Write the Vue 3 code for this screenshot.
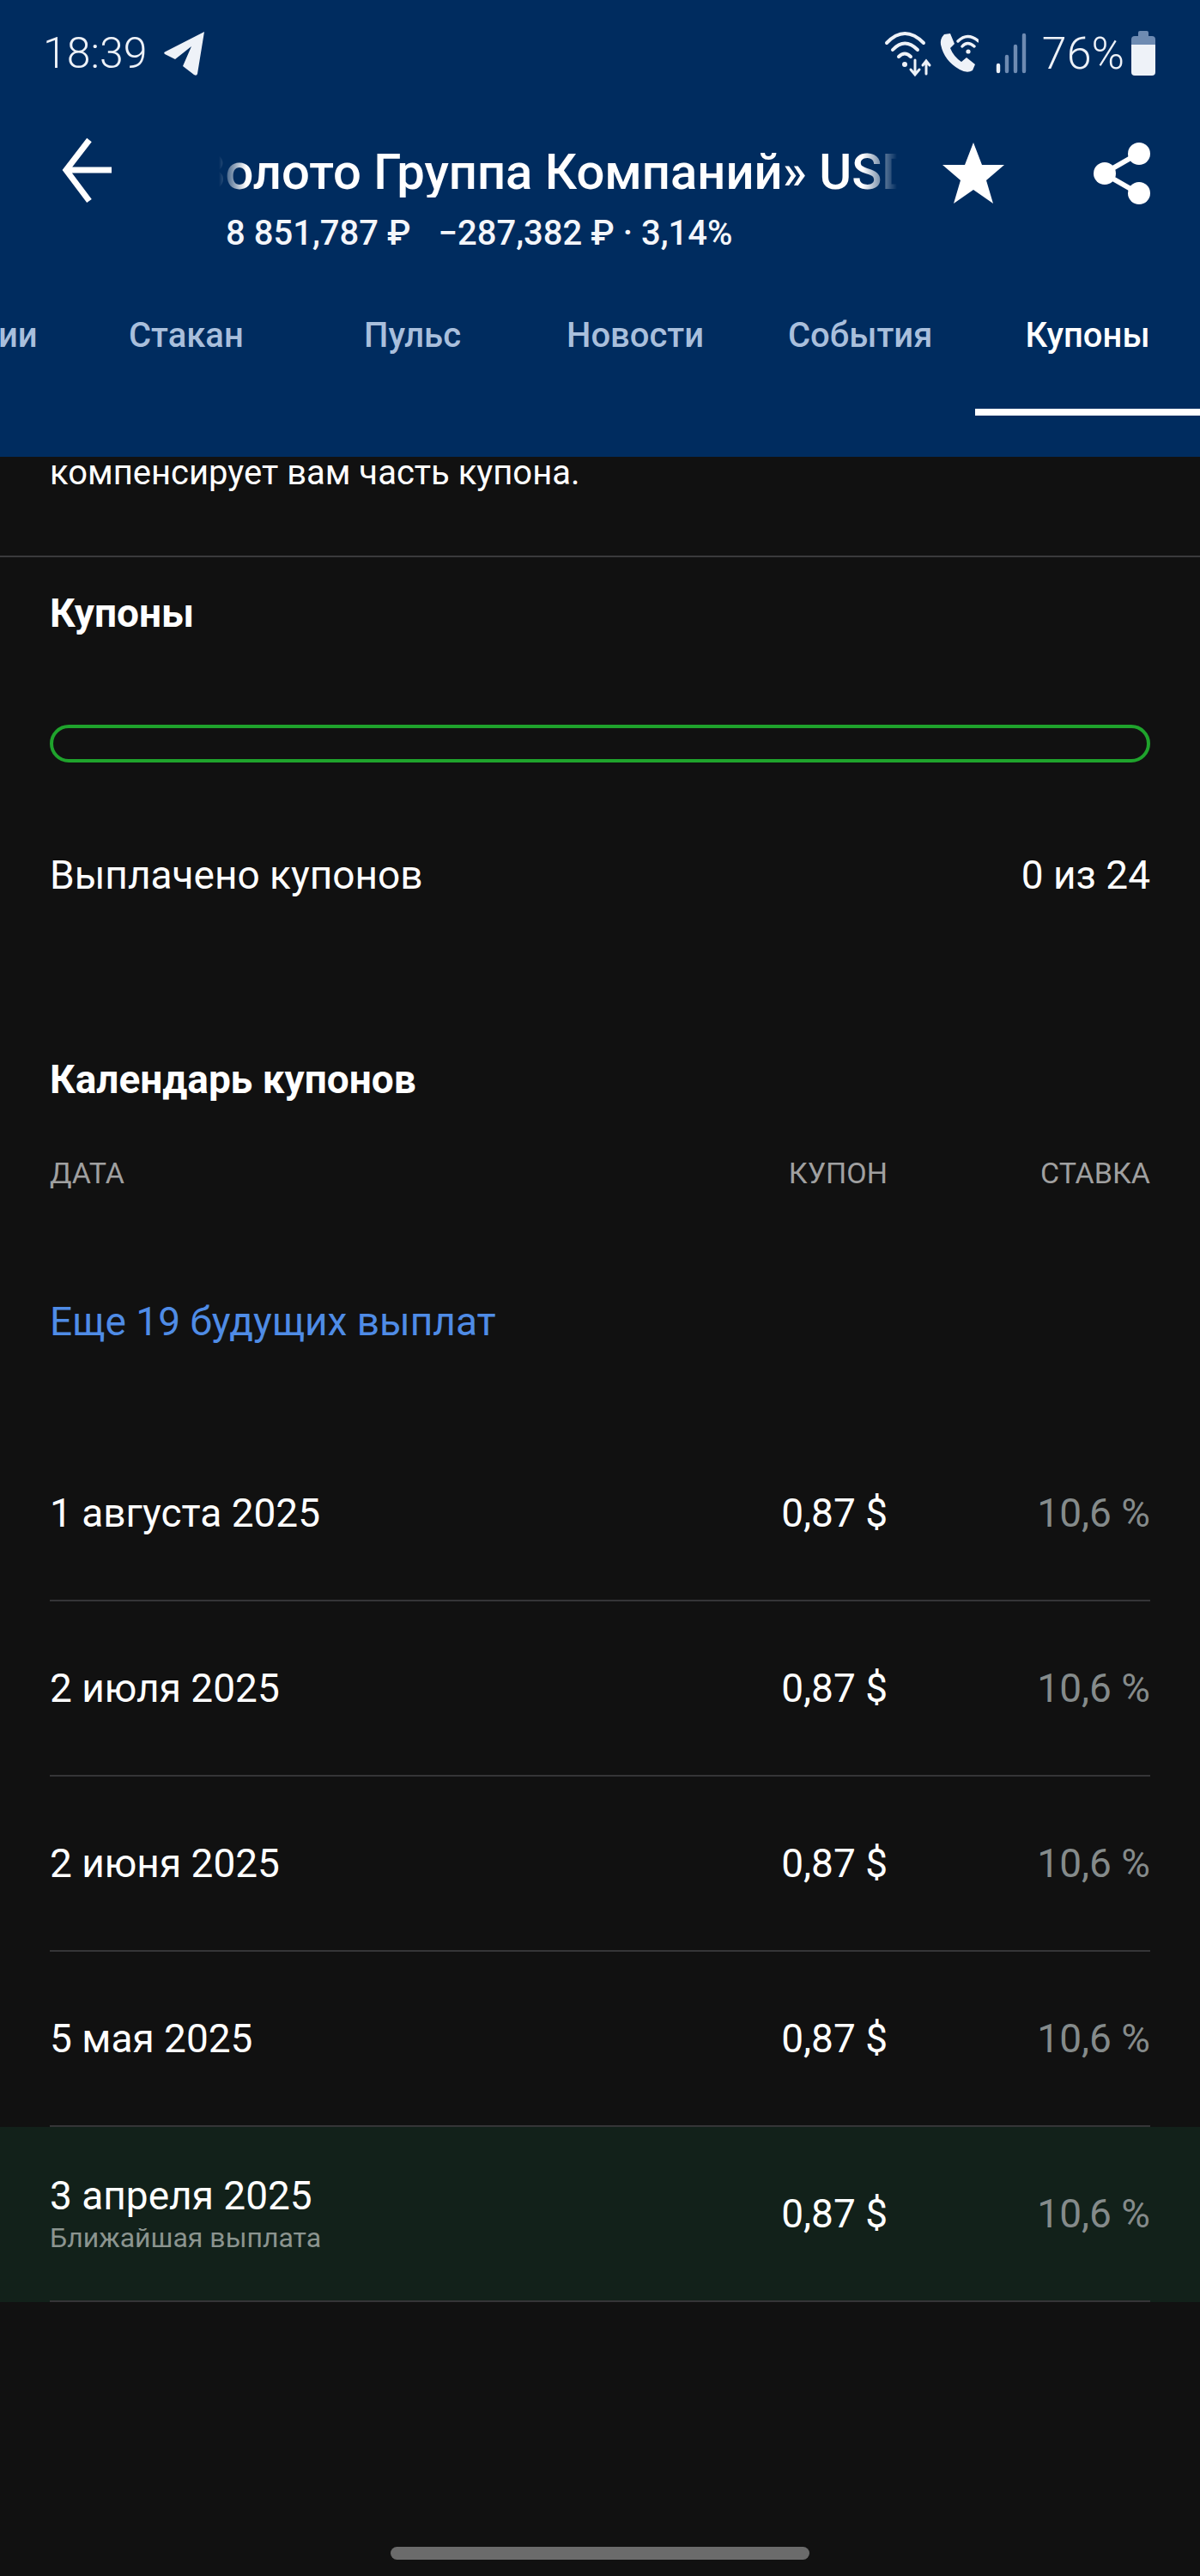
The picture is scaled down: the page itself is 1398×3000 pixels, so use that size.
<script setup>
const tabs = [
  { label: 'Стакан' },
  { label: 'Пульс' },
  { label: 'Новости' },
  { label: 'События' },
  { label: 'Купоны', active: true }
]
const rows = [
  { date: '1 августа 2025' },
  { date: '2 июля 2025' },
  { date: '2 июня 2025' },
  { date: '5 мая 2025' },
  { date: '3 апреля 2025', note: 'Ближайшая выплата' }
]
</script>

<template>
  <div class="screen">
    <header class="top">
      <div class="status">
        <div class="status-left">
          <span class="clock">18:39</span>
          <svg class="tg" viewBox="0 0 48 52"><path d="M47 1 L39 50 Q38 53 35 51 L22 41 L32 18 L13 33 L1 27 Q-1 25 2 24 Z" fill="#eef2f8"/></svg>
        </div>
        <div class="status-right">
          <svg class="wifi" viewBox="0 0 56 56" fill="none" stroke="#eef2f8" stroke-linecap="round">
            <path d="M3 16 Q24 -6 46 16" stroke-width="4"/>
            <path d="M10 24 Q24 9 39 24" stroke-width="4"/>
            <path d="M17 32 Q24 25 31 32" stroke-width="4"/>
            <circle cx="24" cy="41" r="3" fill="#eef2f8" stroke="none"/>
            <path d="M36 36 V52 M31 47 L36 53 L41 47" stroke-width="3"/>
            <path d="M49 52 V38 M45 42 L49 37 L53 42" stroke-width="3"/>
          </svg>
          <svg class="call" viewBox="0 0 46 48" fill="none">
            <path d="M6 2 L13 1 L18 13 L13 18 Q17 28 26 34 L32 29 L42 37 L39 44 Q33 48 24 43 Q6 33 2 14 Q1 7 6 2Z" fill="#eef2f8"/>
            <path d="M22 12 Q33 1 46 12 M27 18 Q33 11 41 18" stroke="#eef2f8" stroke-width="3.4" stroke-linecap="round" transform="translate(0 -2)"/>
            <circle cx="34" cy="22" r="2.6" fill="#eef2f8"/>
          </svg>
          <svg class="signal" viewBox="0 0 36 48" fill="none" stroke-width="4.4" stroke-linecap="round">
            <path d="M3 38 V45" stroke="#eef2f8"/>
            <path d="M13 28 V45 M23 16 V45 M33 3 V45" stroke="#6e8bb2"/>
          </svg>
          <span class="battery-text">76%</span>
          <div class="battery"><i class="battery-cap"></i><i class="battery-empty"></i><i class="battery-full"></i></div>
        </div>
      </div>

      <div class="titlebar">
        <svg class="back" viewBox="0 0 60 78" fill="none" stroke="#fff" stroke-width="7"><path d="M58 38 H5 M32 3 L5 38 L32 74"/></svg>
        <div class="titles">
          <div class="title-clip"><span class="title">«Золото Группа Компаний» USD</span></div>
          <div class="sub"><span>8 851,787 ₽</span><span>−287,382 ₽ · 3,14%</span></div>
        </div>
        <svg class="star" viewBox="0 0 72 72"><path d="M36 0 L46 26 L72 26 L51 44 L59 71 L36 55 L13 71 L21 44 L0 26 L26 26Z" fill="#fff"/></svg>
        <svg class="share" viewBox="0 0 66 72" fill="#fff">
          <path d="M52 13 L12 36 L52 59" fill="none" stroke="#fff" stroke-width="6"/>
          <circle cx="53" cy="13" r="13"/><circle cx="13" cy="36" r="13"/><circle cx="53" cy="59" r="13"/>
        </svg>
      </div>

      <nav class="tabs">
        <span class="tab-cut">ии</span>
        <span v-for="t in tabs" :key="t.label" class="tab" :class="{ active: t.active }">{{ t.label }}</span>
      </nav>
    </header>

    <main class="content">
      <p class="intro">компенсирует вам часть купона.</p>
      <hr class="rule" />

      <h2 class="h-coupons">Купоны</h2>
      <div class="progress"></div>
      <div class="paid"><span>Выплачено купонов</span><span>0 из 24</span></div>

      <h2 class="h-cal">Календарь купонов</h2>
      <div class="thead"><span class="c-date">ДАТА</span><span class="c-coupon">КУПОН</span><span class="c-rate">СТАВКА</span></div>
      <a class="more">Еще 19 будущих выплат</a>

      <div class="list">
        <div v-for="r in rows" :key="r.date" class="row" :class="{ next: r.note }">
          <div class="row-inner">
            <div class="c-date">
              <div class="date">{{ r.date }}</div>
              <div v-if="r.note" class="note">{{ r.note }}</div>
            </div>
            <div class="c-coupon">0,87 $</div>
            <div class="c-rate rate">10,6 %</div>
          </div>
        </div>
      </div>
    </main>

    <div class="home"></div>
  </div>
</template>

<style>
html, body { margin: 0; background: #111111; }
</style>

<style scoped>
.screen {
  width: 1398px;
  height: 3000px;
  position: relative;
  overflow: hidden;
  background: #111111;
  font-family: Roboto, "Noto Sans", sans-serif;
  color: #fff;
}
.top { height: 532px; background: #002c5f; overflow: hidden; }
.status { height: 124px; display: flex; justify-content: space-between; align-items: center; padding: 0 52px 0 50px; }
.status-left, .status-right { display: flex; align-items: center; }
.clock { font-size: 50px; font-weight: 300; color: #eef2f8; letter-spacing: 0; }
.tg { width: 48px; height: 52px; margin-left: 20px; }
.wifi { width: 56px; height: 56px; }
.call { width: 46px; height: 48px; margin-left: 8px; }
.signal { width: 36px; height: 48px; margin-left: 20px; }
.battery-text { font-size: 52px; font-weight: 300; color: #eef2f8; margin-left: 18px; }
.battery { width: 28px; height: 52px; margin-left: 8px; display: flex; flex-direction: column; align-items: center; }
.battery-cap { width: 12px; height: 6px; background: #6e8bb2; border-radius: 2px 2px 0 0; }
.battery-empty { width: 28px; height: 10px; background: #6e8bb2; border-radius: 4px 4px 0 0; }
.battery-full { width: 28px; height: 36px; background: #eef2f8; border-radius: 0 0 4px 4px; }

.titlebar { height: 160px; display: flex; align-items: flex-start; position: relative; }
.back { width: 60px; height: 78px; margin: 36px 0 0 72px; flex: none; }
.titles { width: 790px; margin-left: 123px; flex: none; }
.title-clip {
  width: 790px;
  overflow: hidden;
  white-space: nowrap;
  margin-top: 46px;
  height: 60px;
  -webkit-mask-image: linear-gradient(90deg, transparent 0, #000 32px, #000 750px, transparent 790px);
  mask-image: linear-gradient(90deg, transparent 0, #000 32px, #000 750px, transparent 790px);
}
.title { display: inline-block; font-size: 58px; line-height: 60px; font-weight: 500; margin-left: -56px; }
.sub { font-size: 40px; font-weight: 500; line-height: 48px; margin-top: 18px; display: flex; gap: 32px; padding-left: 8px; color: #f4f6fa; }
.star { width: 72px; height: 72px; margin: 42px 0 0 53px; flex: none; }
.share { width: 66px; height: 72px; margin: 42px 0 0 104px; flex: none; }

.tabs { height: 248px; position: relative; font-size: 40px; font-weight: 500; color: #a9bfdc; }
.tabs span { position: absolute; top: 83px; line-height: 48px; }
.tab-cut { left: -2px; }
.tab:nth-child(2) { left: 150px; }
.tab:nth-child(3) { left: 424px; }
.tab:nth-child(4) { left: 660px; }
.tab:nth-child(5) { left: 918px; }
.tab.active { left: 1136px; width: 262px; text-align: center; color: #fff; height: 117px; border-bottom: 8px solid #fff; box-sizing: border-box; padding-top: 0; }

.content { padding-top: 0; }
.intro { margin: -1px 0 0; padding: 0 58px; font-size: 40px; line-height: 40px; }
.rule { margin: 76px 0 0; border: 0; height: 2px; background: #3a3a3c; }
.h-coupons, .h-cal { margin: 0; padding: 0 58px; font-size: 46px; font-weight: 700; line-height: 54px; }
.h-coupons { margin-top: 38px; }
.progress { margin: 103px 58px 0; height: 44px; box-sizing: border-box; border: 4px solid #1fa32c; border-radius: 22px; }
.paid { display: flex; justify-content: space-between; margin: 104px 58px 0; font-size: 46px; line-height: 54px; }
.h-cal { margin-top: 184px; }
.thead { display: flex; margin: 62px 58px 0; font-size: 34px; line-height: 40px; color: #a0a0a0; }
.c-date { flex: 1; }
.c-coupon { width: 200px; text-align: right; }
.c-rate { width: 306px; text-align: right; }
.thead .c-rate { width: 306px; }
.more { display: block; margin: 126px 58px 0; font-size: 46px; line-height: 54px; color: #4f8ce6; }
.list { margin-top: 95px; }
.row { height: 204px; }
.row-inner { height: 202px; margin: 0 58px; display: flex; align-items: center; border-bottom: 2px solid #353537; font-size: 46px; box-sizing: content-box; }
.row.next { background: #12211a; }
.date { line-height: 54px; }
.note { font-size: 32px; line-height: 40px; color: #8b948f; margin-top: 2px; }
.rate { color: #858b8b; }
.home { position: absolute; left: 455px; top: 2966px; width: 488px; height: 15px; border-radius: 8px; background: #6b6b6b; }
</style>
